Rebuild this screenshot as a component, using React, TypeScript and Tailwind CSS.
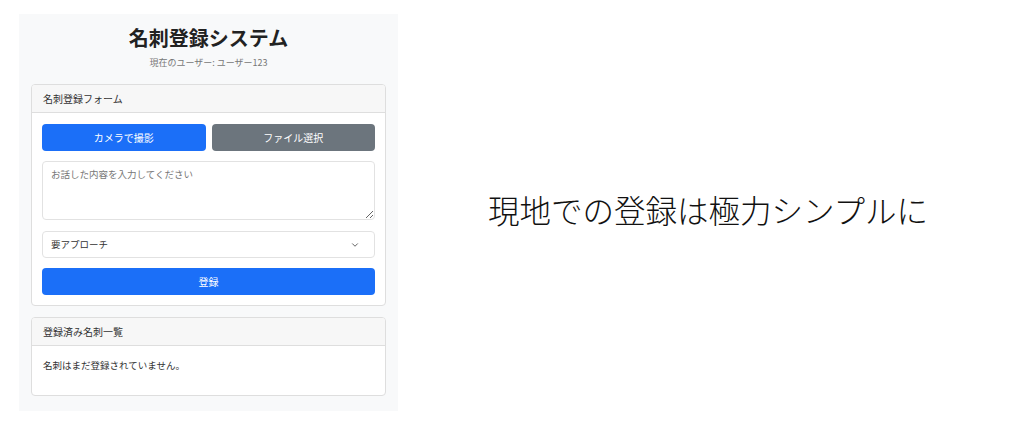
import { ChevronDown } from 'lucide-react';

const FONT = { fontFamily: '"Noto Sans CJK JP", "Noto Sans", sans-serif' };

function Card({ title, children }: { title: string; children: React.ReactNode }) {
  return (
    <div className="bg-white border border-[#dedede] rounded-[4px] overflow-hidden">
      <div className="h-[28px] px-[11px] flex items-center bg-[#f7f7f7] border-b border-[#dedede] text-[10px] text-[#333]">
        {title}
      </div>
      {children}
    </div>
  );
}

export default function App() {
  return (
    <div className="w-[1009px] h-[425px] bg-white flex" style={FONT}>
      {/* Left: app screenshot */}
      <div className="ml-[19px] mt-[14px] w-[379px] h-[397px] bg-[#f8f9fa] px-[12px] flex flex-col">
        <h1 className="mt-[9px] h-[30px] flex items-center justify-center text-[20px] font-bold text-[#222]">
          名刺登録システム
        </h1>
        <p className="mt-[2px] text-center text-[9px] text-[#777] leading-[16px]">
          現在のユーザー: ユーザー123
        </p>

        <div className="mt-[13px]">
          <Card title="名刺登録フォーム">
            <div className="px-[10px] pt-[11px] pb-[10px] flex flex-col">
              <div className="flex gap-[6px]">
                <button className="flex-1 h-[27px] rounded-[4px] bg-[#1b6ff8] text-white text-[10px]">
                  カメラで撮影
                </button>
                <button className="flex-1 h-[27px] rounded-[4px] bg-[#6c757d] text-white text-[10px]">
                  ファイル選択
                </button>
              </div>
              <textarea
                className="mt-[10px] h-[59px] w-full border border-[#e2e2e2] rounded-[4px] px-[8px] py-[5px] text-[9.5px] placeholder:text-[#777] outline-none resize-y"
                placeholder="お話した内容を入力してください"
              />
              <div className="mt-[11px] h-[27px] border border-[#e2e2e2] rounded-[4px] px-[8px] flex items-center justify-between text-[9.5px] text-[#333]">
                <span>要アプローチ</span>
                <ChevronDown size={10} strokeWidth={2} className="text-[#444] mr-[6px]" />
              </div>
              <button className="mt-[10px] h-[27px] rounded-[4px] bg-[#1b6ff8] text-white text-[10px]">
                登録
              </button>
            </div>
          </Card>
        </div>

        <div className="mt-[11px]">
          <Card title="登録済み名刺一覧">
            <div className="h-[49px] px-[11px] pt-[12px] text-[9.5px] text-[#333]">
              名刺はまだ登録されていません。
            </div>
          </Card>
        </div>
      </div>

      {/* Right: caption */}
      <div className="flex-1 flex items-center justify-center pl-[9px] pb-[5px]">
        <p className="text-[31.5px] font-light text-[#111]">
          現地での登録は極力シンプルに
        </p>
      </div>
    </div>
  );
}
